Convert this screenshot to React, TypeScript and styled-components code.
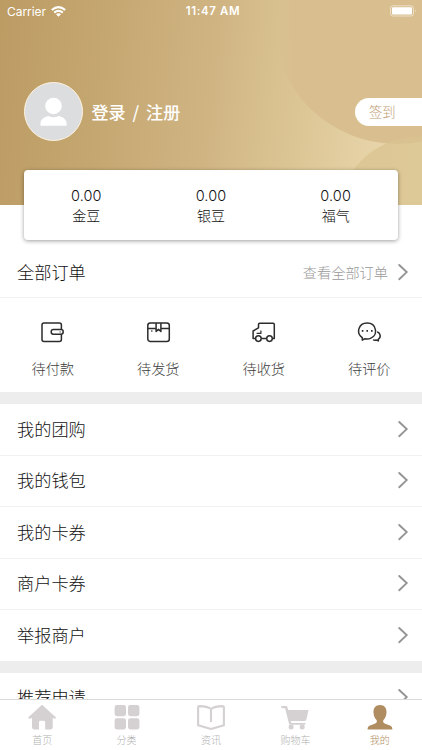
import React from "react";
import styled, { createGlobalStyle } from "styled-components";

const GlobalStyle = createGlobalStyle`
  * { box-sizing: border-box; }
  html, body { margin: 0; padding: 0; }
  body {
    font-family: Inter, "Noto Sans CJK SC", sans-serif;
    font-weight: 300;
    color: #111;
    background: #fff;
    overflow: hidden;
  }
`;

const Screen = styled.div`
  width: 422px;
  height: 750px;
  display: flex;
  flex-direction: column;
  overflow: hidden;
`;

const Content = styled.main`
  flex: 1;
  min-height: 0;
  overflow: hidden;
`;

const Hero = styled.header`
  position: relative;
  height: 205px;
  background: linear-gradient(96deg, #bc9c63 0%, #c5a771 25%, #d0b583 50%, #dbc493 68%, #e6d3a7 88%, #e8d7ab 100%);
`;

const HeroArt = styled.svg`
  position: absolute;
  inset: 0;
`;

const StatusBar = styled.div`
  position: relative;
  display: grid;
  grid-template-columns: 1fr auto 1fr;
  align-items: center;
  height: 22px;
  padding: 0 5px 0 7px;
  color: #fff;
  font-size: 12px;
  font-weight: 400;
`;

const Carrier = styled.div`
  display: flex;
  align-items: center;
  gap: 5px;
  letter-spacing: -0.05px;
`;

const Clock = styled.div`
  font-size: 11.5px;
  font-weight: 600;
  letter-spacing: 0.6px;
  padding-left: 2px;
`;

const BatterySlot = styled.div`
  display: flex;
  justify-content: flex-end;
`;

const Profile = styled.div`
  position: relative;
  display: flex;
  align-items: center;
  margin-top: 60px;
  padding-left: 23.5px;
  height: 59px;
`;

const Avatar = styled.div`
  width: 59px;
  height: 59px;
  border-radius: 50%;
  border: 1px solid #fff4e2;
  background: #dcdddf;
  overflow: hidden;
`;

const LoginText = styled.div`
  margin-left: 9px;
  color: #fff;
  font-family: "Noto Sans CJK SC", sans-serif;
  font-size: 17.1px;
  line-height: 24px;
  font-weight: 500;
  white-space: pre;
  word-spacing: 3px;
`;

const CheckIn = styled.div`
  margin-left: auto;
  width: 67px;
  height: 28px;
  padding-left: 14px;
  border-radius: 14px 0 0 14px;
  background: #fff;
  color: #c09c74;
  font-size: 13.3px;
  line-height: 28px;
`;

const BalanceCard = styled.section`
  position: relative;
  display: grid;
  grid-template-columns: repeat(3, 1fr);
  height: 70px;
  margin: -35px 24px 0;
  padding-top: 16px;
  border-radius: 4px;
  background: #fff;
  box-shadow: 0 1px 4px rgba(0, 0, 0, 0.38);
`;

const Balance = styled.div`
  text-align: center;
  font-size: 14px;
  line-height: 19px;
`;

const Amount = styled.div`
  font-size: 14.5px;
  line-height: 20px;
  letter-spacing: 0.1px;
`;

const Row = styled.div<{ $last?: boolean }>`
  display: flex;
  align-items: center;
  justify-content: space-between;
  height: ${(p) => (p.$last ? 50.5 : 51.5)}px;
  padding: 0 13px 1.5px 17px;
  border-bottom: ${(p) => (p.$last ? "0" : "1px solid #f1f1f1")};
  font-size: 17.2px;
`;

const RowTitle = styled.span`
  padding-bottom: 1px;
`;

const OrdersHeading = styled(Row)`
  height: 58px;
  padding-top: 7px;
  padding-bottom: 0;
`;

const RowAction = styled.div`
  display: flex;
  align-items: center;
  gap: 9px;
  color: #999;
  font-size: 14.2px;
`;

const OrderGrid = styled.section`
  display: grid;
  grid-template-columns: repeat(4, 1fr);
  height: 94px;
  padding-top: 22.5px;
`;

const OrderItem = styled.div`
  display: flex;
  flex-direction: column;
  align-items: center;
  gap: 14px;
  color: #3c3c3c;
  font-size: 14.2px;
  line-height: 21px;

  svg { display: block; }
`;

const Gap = styled.div`
  height: 12px;
  background: #ededed;
`;

const TabBar = styled.nav`
  display: grid;
  grid-template-columns: repeat(5, 1fr);
  height: 51px;
  border-top: 1px solid #d9d9d9;
  background: #fff;
`;

const Tab = styled.div<{ $active?: boolean }>`
  display: flex;
  flex-direction: column;
  align-items: center;
  padding-top: 3px;
  color: ${(p) => (p.$active ? "#b08d60" : "#d5d0d1")};

  svg { display: block; }
`;

const TabLabel = styled.span<{ $active?: boolean }>`
  margin-top: 2px;
  color: ${(p) => (p.$active ? "#b08d60" : "#b0b0b0")};
  font-size: 10px;
  line-height: 15px;
`;

const Chevron = () => (
  <svg width="12" height="18" viewBox="0 0 12 18" fill="none" stroke="#949494" strokeWidth="1.9">
    <path d="M2.2 2 9.7 9.1 2.2 16.2" strokeLinecap="round" />
  </svg>
);

const Wifi = () => (
  <svg width="15" height="11" viewBox="0 0 15 11" fill="none" stroke="#fff" strokeWidth="2.1">
    <path d="M.8 4Q7.5-1.7 14.2 4M3.2 6.6Q7.5 3.1 11.8 6.6" />
    <path d="M7.5 10.7 5 8.2Q7.5 6.4 10 8.2Z" fill="#fff" stroke="none" />
  </svg>
);

const Battery = () => (
  <svg width="27" height="12" viewBox="0 0 27 12">
    <rect x=".5" y=".8" width="23" height="10.2" rx="2.3" fill="none" stroke="#fff" strokeOpacity=".5" />
    <rect x="2" y="2.2" width="20" height="7.4" rx="1" fill="#fff" />
    <path d="M25 4.2Q26.5 5.9 25 7.6Z" fill="#fff" opacity=".5" />
  </svg>
);

const orderIcons = {
  wallet: (
    <>
      <path d="M21.4 8.2V4a2 2 0 0 0-2-2H4a2 2 0 0 0-2 2v14.5a2 2 0 0 0 2 2h15.4a2 2 0 0 0 2-2v-5.1" />
      <rect x="11.2" y="8.6" width="12" height="4.6" rx="2.2" />
      <path d="M19.7 10.9h.8" />
    </>
  ),
  box: (
    <>
      <rect x="1.8" y="2" width="21.5" height="18.5" rx="2.5" />
      <path d="M2 7.4h8.1m4.8 0h8.2M10.1 2v8.4l2.4-2 2.4 2V2M5.2 10h1.2" />
    </>
  ),
  truck: (
    <>
      <path d="M4.4 17.6H2.1V10l5.4-3.2V3.4a1.2 1.2 0 0 1 1.2-1.2h13.4a1.2 1.2 0 0 1 1.2 1.2v14.2h-1.8M10.4 17.6h5" />
      <path d="M9.9 9.4v3H5.6" strokeWidth="1.2" />
      <circle cx="7.4" cy="17.6" r="2.8" />
      <circle cx="18.5" cy="17.6" r="2.8" />
    </>
  ),
  chat: (
    <>
      <path d="M5.3 19.2v-2.6C-1.2 12.2 1.3 2 10.2 2c9.3 0 11.4 12.3 3.3 15.4-1.9.8-4 .8-5.6.3Z" />
      <path d="M20.2 10.7c3.6 1.4 4 5.8 1 7.6l.2 1.6-2-.8c-1.3.2-2.4.1-3.4-.2" />
      <path d="M4.8 9.9h1.6m3 0H11m3 0h1.6" strokeWidth="1.9" />
    </>
  ),
};

const orders: { label: string; icon: keyof typeof orderIcons }[] = [
  { label: "待付款", icon: "wallet" },
  { label: "待发货", icon: "box" },
  { label: "待收货", icon: "truck" },
  { label: "待评价", icon: "chat" },
];

const balances = ["金豆", "银豆", "福气"];
const services = ["我的团购", "我的钱包", "我的卡券", "商户卡券", "举报商户"];

const tabs = [
  {
    label: "首页",
    icon: <path d="M14 1.8 27.5 14c.8.8-.2 1.9-1.2 1.6l-1.6-.6v9c0 1.5-.8 2.4-2.2 2.4h-5.3v-7.1c0-1-.6-1.6-1.5-1.6h-3.2c-.9 0-1.5.6-1.5 1.6v7.1H6.2C4.8 26.4 4 25.5 4 24v-9l-1.7.6C1 16-.2 15 .7 14Z" />,
  },
  {
    label: "分类",
    icon: (
      <>
        <rect x="1.6" y="2" width="11.4" height="11.2" rx="2.4" />
        <rect x="15" y="2" width="11.4" height="11.2" rx="2.4" />
        <rect x="1.6" y="15.2" width="11.4" height="11.2" rx="2.4" />
        <rect x="15" y="15.2" width="11.4" height="11.2" rx="2.4" />
      </>
    ),
  },
  {
    label: "资讯",
    icon: (
      <path
        d="M14 6C11.2 4 6.5 3.2 2.4 3.1c-1 0-1.3.5-1.3 1.3v17.8L14 26.1l12.9-3.9V4.4c0-.8-.3-1.3-1.3-1.3C21.5 3.2 16.8 4 14 6v13"
        fill="none" stroke="currentColor" strokeWidth="2.1" strokeLinejoin="round"
      />
    ),
  },
  {
    label: "购物车",
    icon: (
      <>
        <path d="M.6 3.1h4.3c.9 0 1.4.5 1.6 1.3l.7 2.7h20.3l-2.1 9.2c-.2 1.1-.8 1.7-2 1.7H9.8l.5 2h14v1.7H9.4c-.8 0-1.2-.4-1.4-1.2L4.1 5.3H1.5C.4 5.3-.2 3.7.6 3.1Z" />
        <circle cx="10.1" cy="24.1" r="2.5" />
        <circle cx="21.2" cy="24.1" r="2.5" />
      </>
    ),
  },
  {
    label: "我的",
    active: true,
    icon: <path d="M14 2c-4.5 0-6.9 3.3-6.5 7.7.2 3.4 1.3 5.7 3.2 7.5.5 2.5-.6 3.1-3.9 4.2-3.6 1.2-5.2 1.7-5.2 5.2h24.8c0-3.5-1.6-4-5.2-5.2-3.3-1.1-4.4-1.7-3.9-4.2 1.9-1.8 3-4.1 3.2-7.5C20.9 5.3 18.5 2 14 2Z" />,
  },
];

export default function App() {
  return (
    <>
      <GlobalStyle />
      <Screen>
        <Content>
          <Hero>
            <HeroArt width="422" height="205" viewBox="0 0 422 205">
              <defs>
                <linearGradient id="largeCircle" x1="0" x2="1">
                  <stop stopColor="#d9bf8f" stopOpacity="0" />
                  <stop offset=".08" stopColor="#d9bf8f" />
                  <stop offset="1" stopColor="#d9be90" />
                </linearGradient>
              </defs>
              <circle cx="397" cy="20" r="124" fill="url(#largeCircle)" />
              <circle cx="421" cy="221" r="85" fill="#dac390" opacity=".75" />
            </HeroArt>
            <StatusBar>
              <Carrier>Carrier <Wifi /></Carrier>
              <Clock>11:47 AM</Clock>
              <BatterySlot><Battery /></BatterySlot>
            </StatusBar>
            <Profile>
              <Avatar>
                <svg width="57" height="57" viewBox="0 0 57 57" fill="#fff">
                  <circle cx="28.5" cy="23" r="8.3" />
                  <path d="M15.5 42.7v-2.2c0-3.8 3.4-6.6 8-7.5 3.1 1.7 7 1.7 10.1 0 4.6.9 8 3.7 8 7.5v2.2Z" />
                </svg>
              </Avatar>
              <LoginText>登录 / 注册</LoginText>
              <CheckIn>签到</CheckIn>
            </Profile>
          </Hero>
          <BalanceCard>
            {balances.map((label) => (
              <Balance key={label}>
                <Amount>0.00</Amount>
                {label}
              </Balance>
            ))}
          </BalanceCard>
          <OrdersHeading>
            <RowTitle>全部订单</RowTitle>
            <RowAction>查看全部订单 <Chevron /></RowAction>
          </OrdersHeading>
          <OrderGrid>
            {orders.map(({ label, icon }) => (
              <OrderItem key={label}>
                <svg width="25" height="23" viewBox="0 0 25 23" fill="none" stroke="#2c2c2c" strokeWidth="1.5" strokeLinejoin="round">
                  {orderIcons[icon]}
                </svg>
                {label}
              </OrderItem>
            ))}
          </OrderGrid>
          <Gap />
          {services.map((label, i) => (
            <Row key={label} $last={i === services.length - 1}>
              <RowTitle>{label}</RowTitle>
              <Chevron />
            </Row>
          ))}
          <Gap />
          <Row>
            <RowTitle>推荐申请</RowTitle>
            <Chevron />
          </Row>
        </Content>
        <TabBar>
          {tabs.map(({ label, icon, active }) => (
            <Tab key={label} $active={active}>
              <svg width="28" height="28" viewBox="0 0 28 28" fill="currentColor">{icon}</svg>
              <TabLabel $active={active}>{label}</TabLabel>
            </Tab>
          ))}
        </TabBar>
      </Screen>
    </>
  );
}
